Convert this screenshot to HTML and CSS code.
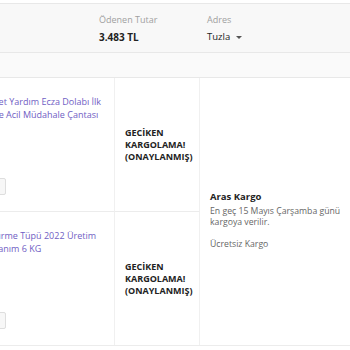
FILE: index.html
```html
<!DOCTYPE html>
<html lang="tr">
<head>
    <meta charset="UTF-8">
    <meta name="viewport" content="width=device-width, initial-scale=1.0">
    <title>Sipariş Detayı</title>
    <link rel="stylesheet" href="styles.css">
</head>
<body>
    <div class="panel">
        <!-- Sipariş özeti -->
        <div class="summary">
            <div class="summary-item tutar">
                <span class="label">Ödenen Tutar</span>
                <span class="value">3.483 TL</span>
            </div>
            <div class="summary-item adres">
                <span class="label">Adres</span>
                <span class="value normal">Tuzla <i class="caret"></i></span>
            </div>
        </div>

        <div class="subbar"></div>

        <!-- Ürünler -->
        <div class="items">
            <div class="cell product">
                <div class="product-info">
                    <a href="#" class="product-name">Yüksek Set Yardım Ecza Dolabı İlk Yardım ve Acil Müdahale Çantası</a>
                    <span class="qty-box"></span>
                </div>
            </div>
            <div class="cell status">
                <p>GECİKEN KARGOLAMA! (ONAYLANMIŞ)</p>
            </div>
            <div class="cell cargo">
                <p class="cargo-name">Aras Kargo</p>
                <p class="cargo-date">En geç 15 Mayıs Çarşamba günü kargoya verilir.</p>
                <p class="cargo-free">Ücretsiz Kargo</p>
            </div>

            <div class="cell product last">
                <div class="product-info">
                    <a href="#" class="product-name">Ev Söndürme Tüpü 2022 Üretim Tam Kullanım 6 KG</a>
                    <span class="qty-box"></span>
                </div>
            </div>
            <div class="cell status last">
                <p>GECİKEN KARGOLAMA! (ONAYLANMIŞ)</p>
            </div>
        </div>
    </div>
</body>
</html>
```

FILE: styles.css
```css
* {
    margin: 0;
    padding: 0;
    box-sizing: border-box;
}

body {
    font-family: 'Open Sans', sans-serif;
    background-color: #fff;
    color: #333;
    overflow: hidden;
}

.panel {
    width: 350px;
    padding-top: 3px;
}

/* Özet alanı */
.summary {
    display: flex;
    height: 50px;
    background-color: #f8f8f8;
    border-top: 1px solid #e8e8e8;
    border-bottom: 1px solid #e8e8e8;
    padding-top: 9px;
}

.summary-item {
    display: flex;
    flex-direction: column;
    gap: 4px;
}

.tutar {
    margin-left: 99px;
    width: 108px;
}

.label {
    font-size: 9px;
    color: #a0a0a0;
    line-height: 13px;
}

.value {
    font-size: 10px;
    font-weight: bold;
    color: #222;
    line-height: 14px;
}

.value.normal {
    font-size: 9.5px;
    font-weight: normal;
}

.caret {
    display: inline-block;
    width: 0;
    height: 0;
    border-left: 3px solid transparent;
    border-right: 3px solid transparent;
    border-top: 3px solid #555;
    margin-left: 3px;
    vertical-align: middle;
}

.subbar {
    height: 25px;
    background-color: #fafafa;
    border-bottom: 1px solid #e8e8e8;
}

/* Ürün tablosu */
.items {
    display: grid;
    grid-template-columns: 115px 85px 150px;
    grid-template-rows: 134px 133px;
    border-bottom: 1px solid #ececec;
}

.cell {
    border-bottom: 1px solid #ececec;
}

.cell.last {
    border-bottom: none;
}

.product {
    border-right: 1px solid #f0f0f0;
}

.product-info {
    margin-left: -38px;
    width: 141px;
    padding-top: 17px;
    display: flex;
    flex-direction: column;
}

.product-name {
    font-size: 9px;
    line-height: 13px;
    color: #7060c4;
    text-decoration: none;
}

.qty-box {
    display: block;
    width: 44px;
    height: 17px;
    margin-top: 57px;
    background-color: #f7f7f7;
    border: 1px solid #dedede;
    border-radius: 2px;
}

.status {
    border-right: 1px solid #f0f0f0;
    display: flex;
    align-items: center;
    padding: 0 10px;
}

.status p {
    font-size: 9px;
    font-weight: bold;
    line-height: 12px;
    color: #222;
}

.cargo {
    grid-column: 3;
    grid-row: 1 / 3;
    border-bottom: none;
    display: flex;
    flex-direction: column;
    justify-content: center;
    padding: 16px 4px 0 10px;
}

.cargo-name {
    font-size: 9.5px;
    font-weight: bold;
    color: #222;
    margin-bottom: 3px;
}

.cargo-date {
    font-size: 8.7px;
    line-height: 11px;
    color: #666;
    margin-bottom: 10px;
}

.cargo-free {
    font-size: 8.7px;
    color: #666;
}
```
